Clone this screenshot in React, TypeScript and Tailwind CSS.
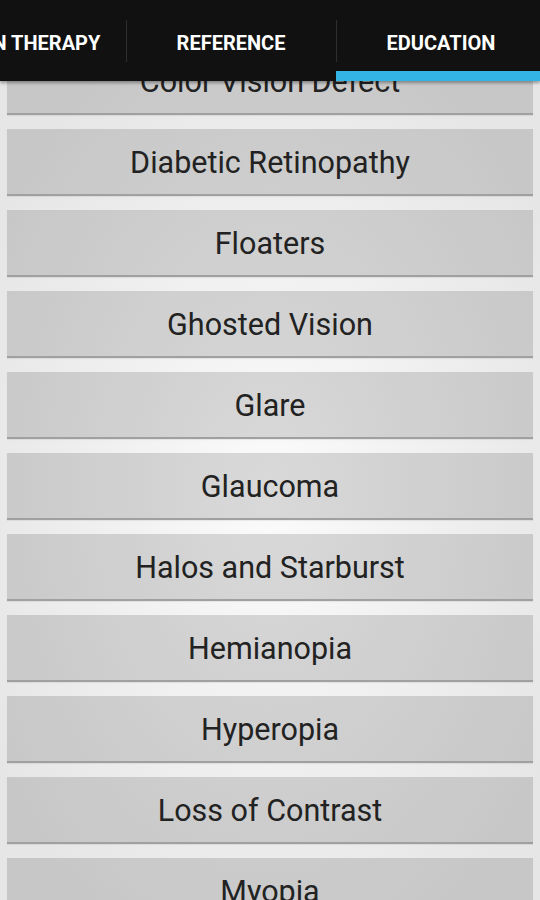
import React from "react";

const items = [
  "Color Vision Defect",
  "Diabetic Retinopathy",
  "Floaters",
  "Ghosted Vision",
  "Glare",
  "Glaucoma",
  "Halos and Starburst",
  "Hemianopia",
  "Hyperopia",
  "Loss of Contrast",
  "Myopia",
];

export default function App() {
  return (
    <div
      className="relative h-[900px] w-[540px] overflow-hidden bg-[radial-gradient(ellipse_60%_55%_at_50%_55%,#fbfbfb_0%,#efefef_55%,#e6e6e6_100%)]"
      style={{ fontFamily: "Roboto, 'Noto Sans', sans-serif" }}
    >
      <div className="flex flex-col gap-[14px] px-[7px] pt-[48px]">
        {items.map((t) => (
          <div
            key={t}
            className="flex h-[67px] shrink-0 items-center justify-center border-b-2 border-b-[#a0a0a0] bg-black/[0.135] pt-[2px] text-[30.5px] text-[#222222] shadow-[0_1px_1px_rgba(0,0,0,0.06)]"
          >
            {t}
          </div>
        ))}
      </div>

      <div className="absolute left-0 top-0 h-[81px] w-[540px] overflow-hidden bg-[#111111] shadow-[0_2px_3px_rgba(0,0,0,0.35)]">
        <div className="relative ml-[-84px] flex h-full w-[630px] text-[20px] font-bold text-white">
          <div className="flex h-full w-[210px] items-center justify-center pt-[4px]">VISION THERAPY</div>
          <div className="relative flex h-full w-[210px] items-center justify-center pt-[4px]">
            <div className="absolute left-0 top-[20px] h-[42px] w-px bg-[#2e2e2e]" />
            REFERENCE
          </div>
          <div className="relative flex h-full w-[210px] items-center justify-center pt-[4px]">
            <div className="absolute left-0 top-[20px] h-[42px] w-px bg-[#2e2e2e]" />
            EDUCATION
            <div className="absolute bottom-0 left-0 h-[10px] w-full bg-[#33b5e5]" />
          </div>
        </div>
      </div>
    </div>
  );
}
